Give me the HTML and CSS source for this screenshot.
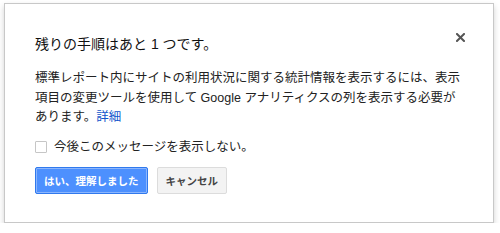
FILE: index.html
```html
<!DOCTYPE html>
<html lang="ja">

<head>
    <meta charset="UTF-8">
    <meta name="viewport" content="width=device-width, initial-scale=1.0">
    <title>残りの手順</title>
    <link rel="stylesheet" href="styles.css">
</head>

<body>
    <div class="dialog">
        <!-- 閉じるボタン -->
        <span class="close" title="閉じる">
            <svg width="9" height="9" viewBox="0 0 9 9">
                <path d="M1 1 L8 8 M8 1 L1 8" stroke="#555" stroke-width="2" stroke-linecap="square" />
            </svg>
        </span>

        <h2 class="title">残りの手順はあと 1 つです。</h2>

        <p class="message">標準レポート内にサイトの利用状況に関する統計情報を表示するには、表示項目の変更ツールを使用して Google アナリティクスの列を表示する必要があります。<a href="#">詳細</a></p>

        <label class="check-row">
            <span class="checkbox"></span>
            今後このメッセージを表示しない。
        </label>

        <div class="buttons">
            <button class="btn btn-action">はい、理解しました</button>
            <button class="btn">キャンセル</button>
        </div>
    </div>
</body>

</html>
```

FILE: styles.css
```css
/* 全体 */
body {
    margin: 0;
    background-color: #fff;
    font-family: "Liberation Sans", "Noto Sans CJK JP", sans-serif;
    color: #222;
}

.dialog {
    position: relative;
    box-sizing: border-box;
    width: 490px;
    margin: 3px 0 0 4px;
    padding: 30px 28px 28px 30px;
    background: #fff;
    border: 1px solid #c8c8c8;
    box-shadow: 0 3px 6px rgba(0, 0, 0, 0.18);
}

.close {
    position: absolute;
    top: 29px;
    right: 28px;
    width: 9px;
    height: 9px;
    cursor: pointer;
}

.close svg {
    display: block;
}

.title {
    margin: 0;
    font-size: 14px;
    font-weight: normal;
    line-height: 20px;
    color: #111;
}

.message {
    margin: 15px 0 0;
    max-width: 432px;
    font-size: 12.5px;
    line-height: 19.5px;
    color: #222;
}

.message a {
    color: #15c;
    text-decoration: none;
}

/* チェックボックス */
.check-row {
    display: flex;
    align-items: center;
    gap: 7px;
    margin-top: 9px;
    font-size: 12.5px;
    line-height: 20px;
    color: #222;
}

.checkbox {
    box-sizing: border-box;
    width: 12px;
    height: 12px;
    border: 1px solid #c6c6c6;
    border-radius: 1px;
    background: #fff;
}

/* ボタン */
.buttons {
    display: flex;
    gap: 9px;
    margin-top: 10px;
}

.btn {
    box-sizing: border-box;
    height: 27px;
    padding: 0 8px;
    border: 1px solid #dcdcdc;
    border-radius: 2px;
    background: #f3f3f3;
    color: #444;
    font-family: inherit;
    font-size: 10.5px;
    font-weight: bold;
    cursor: pointer;
}

.btn-action {
    background: #4d90fe;
    border-color: #3079ed;
    color: #fff;
    box-shadow: inset 0 0 0 1px rgba(255, 255, 255, 0.35);
}
```
